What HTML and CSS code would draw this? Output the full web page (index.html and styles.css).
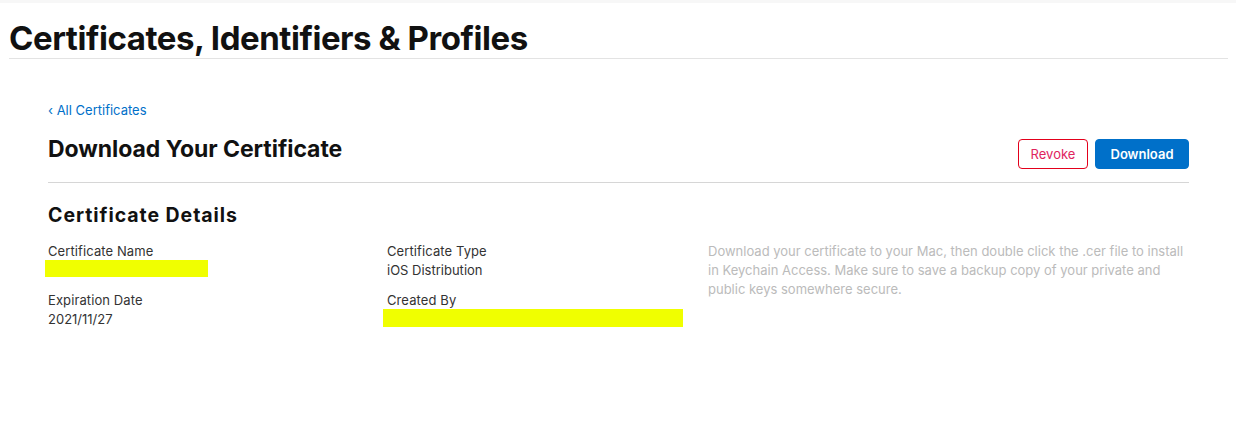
FILE: index.html
```html
<!DOCTYPE html>
<html>
<head>
<meta charset="utf-8">
<link rel="stylesheet" href="styles.css">
</head>
<body>
<div class="topstrip"></div>
<header class="page-header">
  <h1 class="page-title">Certificates, Identifiers &amp; Profiles</h1>
</header>
<main class="content">
  <a class="back-link" href="#">&lsaquo; All Certificates</a>
  <div class="title-row">
    <h2 class="section-title">Download Your Certificate</h2>
    <div class="actions">
      <button class="btn btn-revoke">Revoke</button>
      <button class="btn btn-download">Download</button>
    </div>
  </div>
  <h3 class="details-title">Certificate Details</h3>
  <div class="details">
    <div class="col">
      <div class="field">
        <div class="label">Certificate Name</div>
        <div class="value"><span class="redact redact-name"></span></div>
      </div>
      <div class="field">
        <div class="label">Expiration Date</div>
        <div class="value">2021/11/27</div>
      </div>
    </div>
    <div class="col">
      <div class="field">
        <div class="label">Certificate Type</div>
        <div class="value">iOS Distribution</div>
      </div>
      <div class="field">
        <div class="label">Created By</div>
        <div class="value"><span class="redact redact-creator"></span></div>
      </div>
    </div>
    <p class="note">Download your certificate to your Mac, then double click the .cer file to install in Keychain Access. Make sure to save a backup copy of your private and public keys somewhere secure.</p>
  </div>
</main>
</body>
</html>
```

FILE: styles.css
```css
* { box-sizing: border-box; }
html, body { margin: 0; padding: 0; background: #fff; }
body { font-family: Inter, "Liberation Sans", sans-serif; color: #111; }

.topstrip { height: 3px; background: #f7f7f7; }

.page-header {
  margin: 0 8px 0 9px;
  height: 56px;
  border-bottom: 1px solid #e3e3e3;
  display: flex;
  align-items: flex-end;
}
.page-title {
  margin: 0 0 3px 0;
  font-size: 33px;
  font-weight: 700;
  letter-spacing: -0.45px;
  line-height: 1;
  color: #111;
}

.content {
  padding: 0 47px 0 48px;
}
.back-link {
  display: inline-block;
  margin-top: 43px;
  font-size: 13px;
  line-height: 16px;
  color: #0070c9;
  text-decoration: none;
}
.title-row {
  display: flex;
  justify-content: space-between;
  align-items: flex-start;
  border-bottom: 1px solid #d6d6d6;
  padding-bottom: 13px;
  margin-top: 9px;
}
.section-title {
  margin: 7px 0 0 0;
  font-size: 23px;
  line-height: 28px;
  font-weight: 700;
  color: #111;
  letter-spacing: -0.05px;
}
.actions { display: flex; gap: 7px; margin-top: 11px; }
.btn {
  height: 30px;
  border-radius: 4px;
  font-family: Inter, "Liberation Sans", sans-serif;
  font-size: 13px;
  padding: 0;
  cursor: pointer;
}
.btn-revoke {
  width: 70px;
  background: #fff;
  border: 1px solid #e3001b;
  color: #e0245e;
}
.btn-download {
  width: 94px;
  background: #0070c9;
  border: 1px solid #0070c9;
  color: #fff;
  font-weight: 600;
}

.details-title {
  margin: 20px 0 0 0;
  font-size: 19.5px;
  line-height: 24px;
  font-weight: 700;
  letter-spacing: 0.95px;
  color: #111;
}
.details {
  display: grid;
  grid-template-columns: 339px 321px 1fr;
  margin-top: 15px;
}
.field { margin-bottom: 11px; }
.label, .value {
  font-size: 13px;
  line-height: 19px;
  color: #333;
}
.value { display: flow-root; }
.label { letter-spacing: 0.1px; }
.redact {
  display: block;
  background: #f0ff00;
}
.redact-name { width: 163px; height: 17px; margin: -1px 0 3px -3px; }
.redact-creator { width: 300px; height: 18px; margin: -1px 0 2px -4px; }
.note {
  margin: 0;
  font-size: 13px;
  line-height: 19px;
  color: #bbbbbb;
}
```
